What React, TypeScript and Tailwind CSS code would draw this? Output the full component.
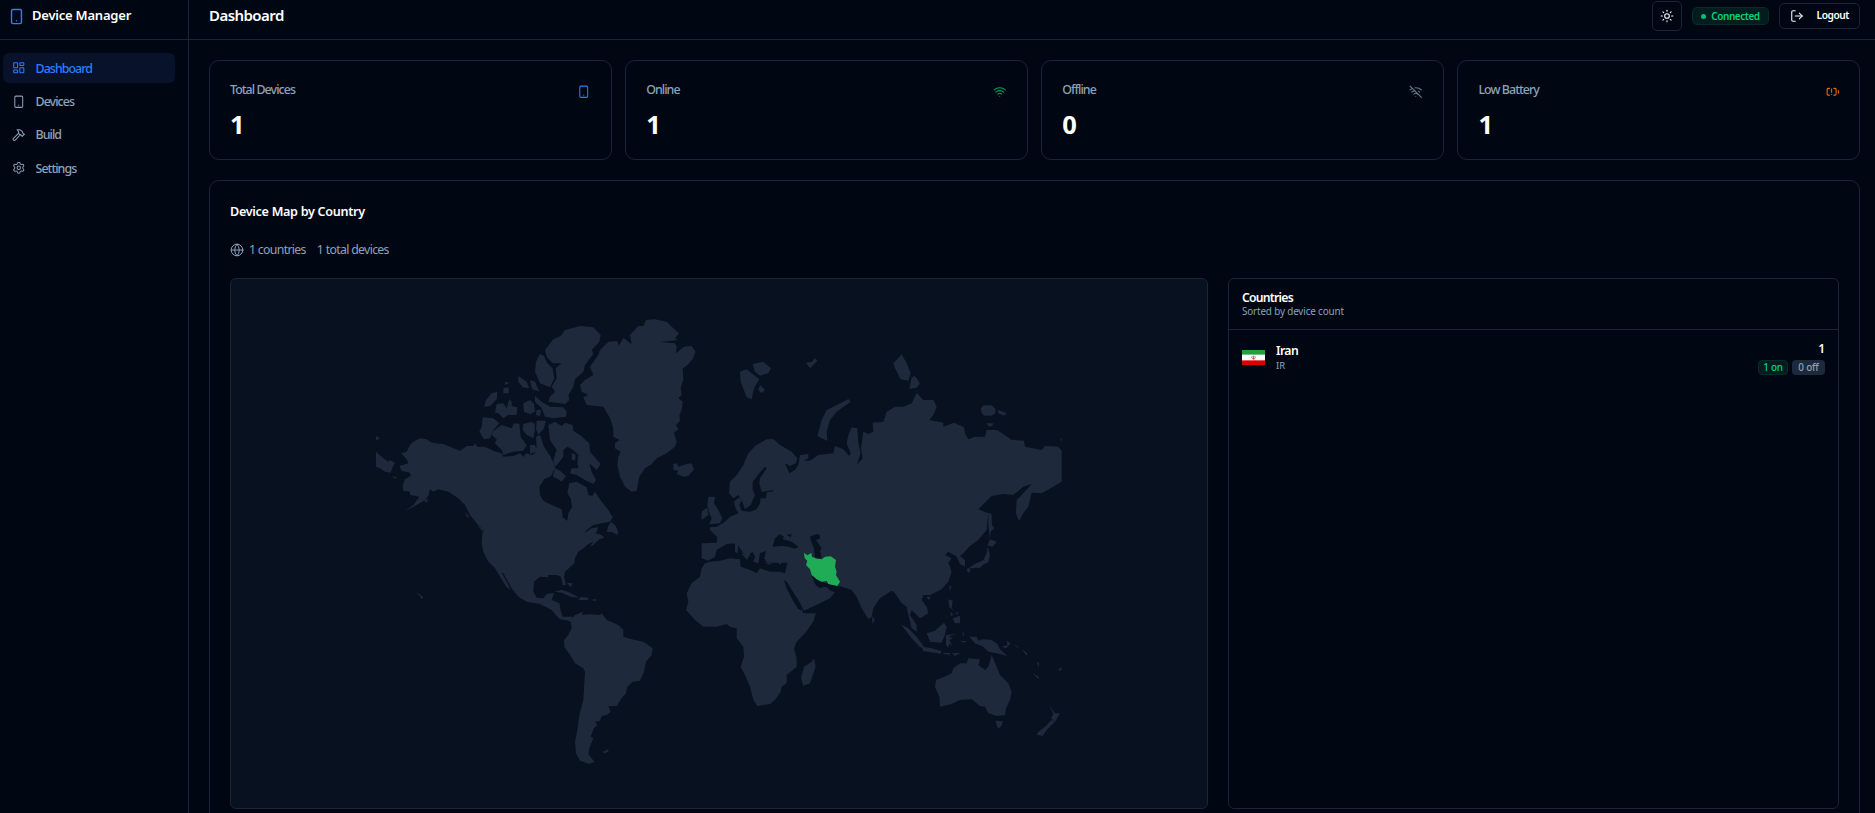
import React from 'react';
import {
  BatteryWarning,
  Globe,
  Hammer,
  LayoutDashboard,
  LogOut,
  Settings,
  Smartphone,
  Sun,
  Wifi,
  WifiOff,
} from 'lucide-react';
import clsx from 'clsx';

const navItems = [
  { label: 'Dashboard', icon: LayoutDashboard, active: true },
  { label: 'Devices', icon: Smartphone, active: false },
  { label: 'Build', icon: Hammer, active: false },
  { label: 'Settings', icon: Settings, active: false },
];

const stats = [
  { label: 'Total Devices', value: 1, icon: Smartphone, color: 'text-[#2b7fff]' },
  { label: 'Online', value: 1, icon: Wifi, color: 'text-[#00a667]' },
  { label: 'Offline', value: 0, icon: WifiOff, color: 'text-[#6b7a90]' },
  { label: 'Low Battery', value: 1, icon: BatteryWarning, color: 'text-[#f0730a]' },
];

const countries = [{ name: 'Iran', code: 'IR', total: 1, online: 1, offline: 0 }];

// Land outlines, grouped by region. Each region has its own origin on the map.
const regions = [
  {
    name: 'north-america',
    transform: 'translate(129 151) scale(0.33333)',
    d: [
      'M123,70 140,65 150,45 160,35 180,25 200,28 212,37 225,40 250,42 280,55 300,62 320,48 340,48 345,40 352,50 375,50 400,62 425,70 430,80 460,78 480,70 490,80 500,70 530,82 545,75 570,85 580,95 585,110 575,135 555,145 538,170 540,195 550,212 575,225 605,238 608,262 622,272 625,250 636,232 632,205 622,190 628,160 650,155 680,172 685,195 697,198 705,185 725,215 745,240 758,262 750,275 725,280 700,285 680,300 672,310 695,295 715,292 708,310 725,315 733,323 718,328 700,345 690,350 700,335 680,345 675,352 655,365 645,385 643,400 615,425 612,440 618,465 608,465 603,440 590,435 565,435 565,442 540,440 522,455 520,485 530,503 550,505 560,492 582,488 575,510 598,520 603,545 608,560 640,560 630,573 598,567 575,540 540,522 500,515 475,500 455,475 430,430 425,428 440,455 452,480 440,472 420,440 405,415 385,395 370,365 365,340 367,310 372,300 350,280 330,255 315,225 295,205 265,185 235,178 220,185 210,178 205,198 195,210 165,228 135,243 160,225 178,200 150,195 150,185 130,182 128,165 135,148 152,138 150,128 125,122 118,108 145,100 140,88Z',
      'M48,65 65,80 85,95 90,90 105,98 98,112 92,128 75,125 60,115 48,110Z',
      'M48,18 60,25 48,32Z',
      'M752,275 765,285 775,305 772,315 758,307 740,305 744,290Z',
      'M350,282 375,302 366,302Z M316,245 328,262 320,262Z M192,212 205,205 200,218Z M95,138 112,143 105,146Z',
      'M168,489 178,492 190,501 184,508 180,498Z',
      'M583,485 605,479 630,488 657,503 632,500 605,488Z M662,501 685,503 684,510 655,510Z M698,508 708,508 708,512 698,512Z M620,458 636,460 634,472Z',
    ],
  },
  {
    name: 'arctic-archipelago-west',
    transform: 'translate(129 21) scale(0.33333)',
    d: [
      'M368,352 400,355 418,370 400,390 390,415 372,418 358,395 365,380Z',
      'M400,392 425,375 455,385 462,370 478,372 482,410 500,435 490,452 460,455 430,465 425,450 405,430 410,418 395,405Z',
      'M378,300 395,280 412,275 410,298 390,318 373,320Z',
      'M410,312 430,310 440,325 448,298 455,305 455,318 472,322 470,345 445,345 430,355 415,340 405,338Z',
      'M490,310 510,300 522,312 525,335 510,342 492,335Z M475,228 500,245 508,265 488,262 475,245Z M512,240 528,250 528,272 518,268Z',
      'M430,265 445,262 447,280 430,280Z M435,245 450,248 435,255Z',
      'M490,372 515,365 525,385 520,415 500,405 488,390Z M510,440 525,435 530,455 512,458Z',
    ],
  },
  {
    name: 'arctic-archipelago-east',
    transform: 'translate(299 21) scale(0.33333)',
    d: [
      'M0,470 15,460 20,440 18,410 30,405 42,440 62,470 75,505 60,530 35,540 0,545Z',
      'M55,375 75,365 95,378 105,368 128,375 130,392 150,405 178,430 180,455 212,492 200,510 178,490 185,515 198,540 190,552 165,540 140,525 120,520 125,505 145,505 142,488 145,465 130,450 112,440 100,450 100,470 85,490 75,500 70,480 80,450 60,420Z',
      'M125,458 137,465 135,482 125,478Z M75,505 90,512 108,528 95,545 80,535 68,530Z',
      'M45,150 70,118 92,108 105,90 150,78 190,82 212,105 208,125 185,150 190,162 165,195 160,215 135,238 130,260 115,285 118,300 105,312 55,305 60,290 75,275 65,260 80,235 77,205 95,190 68,190 50,170Z',
      'M30,162 42,168 52,190 68,205 73,235 60,262 30,250 15,215 18,185Z',
      'M15,288 35,305 60,320 100,322 110,335 108,350 70,355 45,350 35,325 15,305Z',
      'M0,240 15,245 28,275 5,265Z M0,300 8,330 0,345Z M20,330 33,330 30,348 18,345Z M20,362 48,362 42,385 25,405 18,385Z M0,370 15,370 12,410 0,400Z M0,435 15,435 18,455 0,462Z',
      'M150,255 165,240 190,225 180,200 205,165 210,150 235,125 262,123 267,137 280,113 305,133 300,105 325,78 340,78 348,60 375,58 410,65 430,85 447,100 435,115 445,120 390,126 435,130 440,140 438,160 462,140 485,138 497,155 488,178 470,197 458,205 460,240 452,262 455,285 445,295 458,305 455,330 448,345 450,362 438,375 445,388 432,398 440,425 435,440 410,460 380,475 365,492 345,505 328,530 320,572 305,575 285,560 270,530 262,495 265,470 272,455 255,445 255,430 268,420 250,410 250,385 240,355 220,320 170,315 160,292 175,285 155,275Z',
      'M430,492 440,490 445,500 470,492 485,490 492,508 475,528 460,530 440,522 445,512 430,510Z',
    ],
  },
  {
    name: 'south-america',
    transform: 'translate(309 311) scale(0.33333)',
    d: [
      'M72,86 95,88 105,75 130,65 125,75 150,73 180,75 185,70 200,90 235,105 250,120 250,140 275,148 310,155 338,175 335,195 318,215 312,245 300,272 278,275 262,290 258,310 245,325 230,348 205,348 212,365 200,375 185,378 180,392 165,395 172,405 162,415 152,440 160,445 148,475 145,492 163,515 148,522 120,512 108,490 105,455 112,420 118,375 130,330 135,245 130,235 105,220 90,195 73,170 72,150 85,135 95,115 92,95Z',
      'M188,485 205,478 205,485 192,490Z',
    ],
  },
  {
    name: 'africa-and-british-isles',
    transform: 'translate(439 121) scale(0.33333)',
    d: [
      'M105,490 120,485 150,482 180,475 210,478 212,500 235,508 260,520 270,505 300,515 330,515 345,520 350,545 378,590 400,640 438,640 430,665 405,700 380,725 372,745 380,775 380,800 350,825 350,850 335,860 332,875 315,900 300,912 262,918 250,900 240,860 225,825 212,800 222,770 220,740 200,715 200,685 180,680 170,672 140,680 100,680 75,660 48,630 55,605 50,580 65,550 90,530 95,505Z',
      'M432,775 437,800 420,850 400,857 393,835 402,800 425,785Z',
      'M115,290 135,290 132,310 145,330 157,355 150,370 118,373 125,355 118,340 112,315Z M95,335 112,322 115,345 95,360Z',
      'M195,425 205,430 203,460 195,455Z M212,460 237,465 232,480Z M282,488 305,490 300,494Z M325,488 338,486 330,494Z',
      'M605,648 615,660 608,672Z',
    ],
  },
  {
    name: 'eurasia',
    transform: 'translate(499 61) scale(0.33333)',
    d: [
      'M-85,610 -40,608 -38,592 -60,570 -60,562 -40,560 -15,545 0,530 25,520 15,500 12,485 28,472 35,480 28,495 35,512 60,515 80,508 90,490 92,475 108,475 110,457 130,454 130,450 95,456 88,430 90,415 110,385 105,380 88,400 68,425 68,450 75,465 62,495 45,508 35,480 25,465 10,475 -3,460 0,425 20,405 40,375 55,340 75,318 110,298 130,297 150,315 185,335 202,355 198,370 180,378 165,370 178,400 195,390 205,375 210,345 235,342 235,355 220,362 240,362 265,345 310,340 315,318 340,328 358,348 362,340 350,310 355,285 365,262 382,265 385,310 392,340 380,375 398,355 393,325 400,275 415,282 430,275 428,248 460,245 470,215 495,200 520,200 545,190 560,158 580,180 610,180 620,200 610,225 598,240 640,248 640,260 672,248 702,262 705,280 715,298 735,290 765,290 770,270 800,270 825,285 845,300 882,302 885,320 935,330 945,318 985,320 995,332 995,425 970,440 935,460 905,458 895,500 880,520 867,543 858,520 860,480 870,470 905,432 880,440 850,465 820,462 785,468 745,508 775,520 770,570 745,600 720,618 700,640 690,648 705,660 705,680 690,672 680,650 655,635 645,645 665,655 655,668 665,695 655,725 635,748 600,765 580,765 575,780 590,800 595,820 570,835 560,825 545,810 540,825 560,855 560,875 545,865 535,825 530,800 515,790 495,760 485,752 450,775 430,805 425,830 415,838 395,805 380,770 365,750 328,738 295,732 262,722 250,705 248,712 260,738 275,742 290,735 298,750 315,757 300,775 270,790 222,812 205,780 175,735 165,722 165,700 172,668 150,668 110,668 103,655 108,632 90,640 85,670 70,665 75,650 62,625 40,605 38,595 45,598 78,632 60,640 58,650 40,640 20,610 -10,612 -40,630 -45,650 -65,662 -85,655Z',
      'M355,177 362,185 320,215 300,240 290,275 292,303 262,288 275,240 290,210 320,195Z',
      'M30,95 50,88 88,118 72,145 65,178 50,172 32,125Z M68,72 100,65 123,85 115,100 90,107 75,95Z M90,135 105,150 95,160 85,150Z',
      'M228,68 245,66 255,54 262,62 240,85Z',
      'M515,43 530,70 542,100 535,122 512,118 495,85 490,70Z M545,112 555,108 570,130 560,143 538,147Z',
      'M752,205 762,196 785,196 797,208 796,220 785,227 762,227 755,218Z M803,210 815,214 830,220 822,227 805,220Z M768,250 790,250 788,257 778,260Z M992,295 995,293 995,305 992,303Z',
    ],
  },
  {
    name: 'east-asia-and-oceania',
    transform: 'translate(649 221) scale(0.33333)',
    d: [
      'M325,38 335,42 336,75 343,85 332,95 330,120 325,75Z M330,118 350,125 338,140 322,136Z M322,140 330,165 325,187 308,195 300,203 265,205 285,192 310,180 320,160Z M260,207 270,203 270,215 264,218Z',
      'M208,260 215,256 208,275Z M138,290 152,290 147,300Z',
      'M205,298 218,302 215,325 225,335 208,322Z M218,355 240,347 240,370 225,370Z M212,335 220,345 212,348Z M228,335 236,338 230,345Z M192,360 205,345 202,350Z',
      'M140,400 165,392 192,368 200,380 195,405 185,428 150,425Z',
      'M198,405 228,402 205,410 220,414 208,420 217,438 208,432 205,442 198,436Z M247,395 252,400 250,412Z M240,422 262,424 250,428Z',
      'M62,372 85,385 110,410 132,440 120,442 95,415Z M125,440 155,445 185,454 182,461 130,453Z M190,458 212,460 210,464 190,462Z M215,460 242,458 225,468Z',
      'M268,410 290,410 295,422 308,418 335,420 352,432 360,448 382,468 350,460 325,455 310,440 285,430Z M365,440 382,436 380,422 392,430 378,445Z',
      'M400,433 415,440 414,443Z M425,447 442,460 440,467Z M470,485 478,490 475,502Z M457,518 478,532 474,536Z M533,510 545,500 543,512Z',
      'M168,540 190,532 215,520 220,505 240,490 260,490 265,475 300,478 295,495 315,510 325,500 335,465 350,500 360,525 385,550 395,575 390,600 378,625 375,645 350,648 325,640 315,620 300,618 275,598 240,600 215,612 180,620 178,590 165,560Z',
      'M347,662 368,664 366,676 357,685 351,680Z M507,615 525,640 540,640 525,665 513,655 520,642Z M515,660 525,665 500,690 488,708 470,704 472,698 495,680Z',
    ],
  },
];

const seas = [
  // Black Sea, Azov
  'M308,440 315,415 330,402 342,410 338,418 365,425 385,440 375,446 355,440 335,438Z',
  'M350,405 365,401 362,412Z',
  // Caspian
  'M420,410 440,402 450,406 450,415 438,420 455,445 450,452 455,475 435,472 432,445 424,425Z',
  // Red Sea, Persian Gulf
  'M342,540 350,545 378,590 393,622 393,632 383,625 365,595 350,565Z',
  'M425,525 450,545 475,552 500,558 490,572 475,563 462,560 450,565 435,552Z',
];

const iran =
  'M402,458 412,466 424,459 426,470 440,476 455,478 465,470 482,469 498,480 495,500 500,515 498,525 510,545 502,558 475,552 470,543 455,545 440,538 425,525 420,508 408,495 412,483 404,474Z';

function WorldMap() {
  return (
    <svg viewBox="0 0 976 529" className="block h-full w-full">
      {regions.map(region => (
        <g key={region.name} transform={region.transform} fill="#1e293b">
          {region.d.map(d => (
            <path key={d} d={d} />
          ))}
        </g>
      ))}
      <g transform="translate(439 121) scale(0.33333)">
        {seas.map(d => (
          <path key={d} d={d} fill="#071120" />
        ))}
        <path d={iran} fill="#20ac56" />
      </g>
    </svg>
  );
}

function IranFlag() {
  return (
    <svg viewBox="0 0 22 15" preserveAspectRatio="none" className="h-[15px] w-[23px] shrink-0">
      <rect width="22" height="15" fill="#fff" />
      <rect width="22" height="4.8" fill="#239f40" />
      <rect y="10.2" width="22" height="4.8" fill="#da0000" />
      <path d="M0,4.7H22M0,10.3H22" stroke="#fff" strokeWidth="0.4" strokeDasharray="0.7 0.4" />
      <path d="M11,5.6v3.6M9.7,6.2c-.7,1.2-.3,2.5 1.3,3M12.3,6.2c.7,1.2.3,2.5-1.3,3" stroke="#da0000" strokeWidth="0.6" fill="none" />
    </svg>
  );
}

function Sidebar() {
  return (
    <aside className="flex w-[189px] shrink-0 flex-col border-r border-[#1d2433]">
      <div className="flex h-10 items-center gap-[7px] border-b border-[#1d2433] pb-[7px] pl-[8px]">
        <Smartphone size={17} strokeWidth={2} className="text-[#2b7fff]" />
        <span className="text-[13px] font-semibold tracking-[-0.22px] text-white">Device Manager</span>
      </div>
      <nav className="flex flex-col gap-[3.4px] py-[13px] pr-[13px] pl-[3px]">
        {navItems.map(item => (
          <a
            key={item.label}
            className={clsx(
              'flex h-[30px] items-center gap-[10px] rounded-md pl-[9px] text-[12.4px] font-medium tracking-[-0.93px]',
              item.active ? 'bg-[#08122b] text-[#2b7fff]' : 'text-[#90a1b9]'
            )}
          >
            <item.icon size={13.5} strokeWidth={1.8} />
            <span className="pt-0.5">{item.label}</span>
          </a>
        ))}
      </nav>
    </aside>
  );
}

function Header() {
  return (
    <header className="flex h-10 shrink-0 items-center justify-between border-b border-[#1d2433] pr-[15px] pb-[7px] pl-5">
      <h1 className="pb-0.5 text-[15px] font-semibold tracking-[-0.55px] text-white">Dashboard</h1>
      <div className="flex items-center gap-2.5">
        <button className="flex size-[30px] items-center justify-center rounded-[5px] border border-[#1d2433] text-slate-50">
          <Sun size={14} strokeWidth={1.8} />
        </button>
        <span className="flex h-[18px] w-[77px] items-center justify-center gap-[5px] rounded-[5px] border border-[#062c2a] bg-[#031c1e] text-[10px] font-semibold tracking-[-0.45px] text-[#00d479]">
          <span className="size-[5px] rounded-full bg-[#00bc7d]" />
          Connected
        </span>
        <button className="flex h-[26px] w-[81px] items-center justify-between rounded-[5px] border border-[#1d2433] pr-2.5 pl-[10px] text-[10.2px] font-semibold tracking-[-0.45px] text-white">
          <LogOut size={14} strokeWidth={1.8} />
          Logout
        </button>
      </div>
    </header>
  );
}

export default function App() {
  return (
    <div className="flex h-screen overflow-hidden bg-[#000713] font-['Noto_Sans','Open_Sans',sans-serif] text-slate-50">
      <Sidebar />
      <div className="flex min-w-0 flex-1 flex-col">
        <Header />
        <main className="flex flex-1 flex-col gap-5 overflow-hidden pt-5 pr-[15px] pl-5">
          <div className="grid shrink-0 grid-cols-4 gap-[13.5px]">
            {stats.map(stat => (
              <div key={stat.label} className="h-[100px] rounded-[10px] border border-[#1d2433] px-5 pt-5">
                <div className="flex items-start justify-between">
                  <p className="text-[12.4px] leading-[18px] font-medium tracking-[-0.93px] text-[#90a1b9]">{stat.label}</p>
                  <stat.icon size={13.5} strokeWidth={1.8} className={clsx('mt-1', stat.color)} />
                </div>
                <p className="mt-[9px] text-[25.5px] leading-[32px] font-bold text-white">{stat.value}</p>
              </div>
            ))}
          </div>

          <div className="h-[660px] shrink-0 rounded-[10px] border border-[#1d2433] px-5 pt-[21px]">
            <h2 className="text-[12.6px] leading-5 font-semibold tracking-[-0.3px] text-white">Device Map by Country</h2>
            <div className="mt-[18px] flex h-5 items-center text-[12.3px] tracking-[-0.68px] text-[#90a1b9]">
              <Globe size={14} strokeWidth={1.7} />
              <span className="ml-[5px]">1 countries</span>
              <span className="ml-[11px]">1 total devices</span>
            </div>
            <div className="mt-[18px] flex gap-[20px]">
              <div className="h-[531px] w-[978px] shrink-0 rounded-md border border-[#1d2433] bg-[#071120]">
                <WorldMap />
              </div>
              <div className="h-[531px] flex-1 rounded-md border border-[#1d2433]">
                <div className="h-[51px] border-b border-[#1d2433] px-[13px] pt-[10px]">
                  <p className="text-[12.2px] leading-[17px] font-semibold tracking-[-0.75px] text-white">Countries</p>
                  <p className="text-[9.9px] leading-[10px] tracking-[-0.15px] text-[#90a1b9]">Sorted by device count</p>
                </div>
                {countries.map(country => (
                  <div key={country.code} className="flex items-start gap-[11px] px-[13px] pt-[11px]">
                    <div className="pt-[9px]">
                      <IranFlag />
                    </div>
                    <div className="flex-1">
                      <p className="text-[12.2px] leading-[19px] font-semibold tracking-[-0.6px] text-white">{country.name}</p>
                      <p className="text-[9.5px] leading-[11px] text-[#90a1b9]">{country.code}</p>
                    </div>
                    <div className="flex flex-col items-end">
                      <p className="text-[12px] leading-[16px] font-semibold text-white">{country.total}</p>
                      <div className="mt-[3px] flex gap-1">
                        <span className="flex h-[15px] w-[30px] items-center justify-center rounded-[4px] border border-[#062c2a] bg-[#031c1e] text-[9.9px] font-medium tracking-[-0.2px] text-[#00d479]">
                          {country.online} on
                        </span>
                        <span className="flex h-[15px] w-[33px] items-center justify-center rounded-[4px] bg-[#1d293d] text-[9.9px] font-medium tracking-[-0.2px] text-[#90a1b9]">
                          {country.offline} off
                        </span>
                      </div>
                    </div>
                  </div>
                ))}
              </div>
            </div>
          </div>
        </main>
      </div>
    </div>
  );
}
